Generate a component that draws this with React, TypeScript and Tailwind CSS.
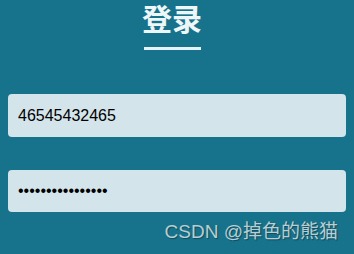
export default function App() {
  return (
    <div className="relative w-[354px] h-[254px] bg-[#17738b] overflow-hidden" style={{ fontFamily: '"Liberation Sans", "Noto Sans CJK SC", sans-serif' }}>
      <div className="flex flex-col items-center pt-[2px] pr-[10px]">
        <h1 className="text-[30px] leading-[36px] font-bold text-[#eef6f8]">登录</h1>
        <div className="mt-[9px] w-[57px] h-[3px] bg-[#e6f2f5]" />
      </div>
      <div className="flex flex-col gap-[33px] px-[8px] pt-[44px]">
        <input
          readOnly
          value="46545432465"
          className="h-[43px] w-full rounded-[4px] bg-[#d3e4ea] px-[10px] text-[16px] text-black outline-none"
        />
        <input
          readOnly
          type="password"
          value="1234567890123456"
          className="h-[42px] w-full rounded-[4px] bg-[#d3e4ea] px-[10px] text-[16px] text-black outline-none"
        />
      </div>
      <div className="absolute right-[16px] bottom-[8px] text-[19px] text-[#b9cdd3] [text-shadow:1px_1px_1px_rgba(0,0,0,0.35)]">
        CSDN @掉色的熊猫
      </div>
    </div>
  )
}
